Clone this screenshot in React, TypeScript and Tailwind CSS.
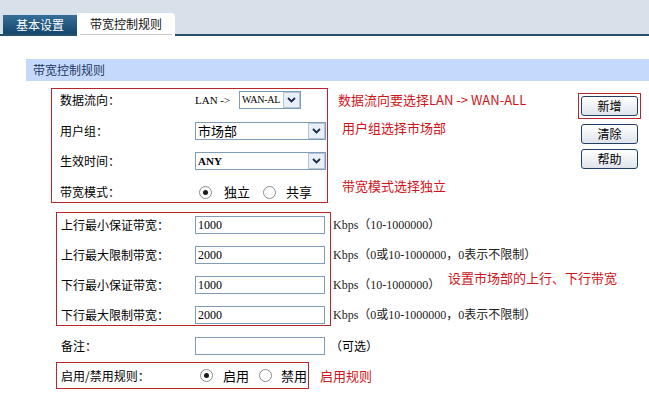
import React from "react";

const FONT = '"Liberation Serif", "Noto Sans CJK SC", serif';
const CJK = '"Noto Sans CJK SC", "Liberation Sans", sans-serif';

function Radio({ checked }: { checked?: boolean }) {
  return (
    <span className="w-[13px] h-[13px] rounded-full border border-[#8c8c8c] bg-white flex items-center justify-center shrink-0">
      {checked && <span className="w-[5px] h-[5px] rounded-full bg-[#1a1a1a]" />}
    </span>
  );
}

function Arrow() {
  return (
    <span className="w-[17px] h-full border border-[#b6c4d8] bg-[#e9eff8] flex items-center justify-center shrink-0">
      <svg width="9" height="6" viewBox="0 0 9 6">
        <path d="M1 1 L4.5 4.5 L8 1" stroke="#1b2a44" strokeWidth="1.8" fill="none" />
      </svg>
    </span>
  );
}

function Select({ w, children, textCls, serif }: { w: string; children: React.ReactNode; textCls: string; serif?: boolean }) {
  return (
    <div className={`${w} h-[18px] border border-[#7f9db9] bg-white flex items-center`}>
      <span
        className={`flex-1 pl-[2px] whitespace-nowrap ${textCls} leading-[16px] text-black`}
        style={{ fontFamily: serif ? FONT : CJK }}
      >
        {children}
      </span>
      <Arrow />
    </div>
  );
}

function Input({ value }: { value?: string }) {
  return (
    <div className="w-[130px] h-[18px] border border-[#7f9db9] bg-white flex items-center pl-[2px] text-[12px] leading-[16px] text-black" style={{ fontFamily: FONT }}>
      {value}
    </div>
  );
}

function Btn({ children }: { children: React.ReactNode }) {
  return (
    <div className="w-[57px] h-[20px] rounded-[3px] border border-[#20406a] bg-gradient-to-b from-white to-[#dfe4eb] flex items-center justify-center text-[12px] text-black">
      {children}
    </div>
  );
}

export default function App() {
  const red = "border border-[#b8262c]";
  return (
    <div className="w-[649px] h-[395px] bg-white overflow-hidden text-[12px] text-black" style={{ fontFamily: CJK }}>
      {/* tab band */}
      <div className="h-[36px] bg-[#d8e0ea] border-b-2 border-[#25506e] flex items-end pl-[3px]">
        <div className="w-[74px] h-[19px] bg-gradient-to-b from-[#356f98] to-[#15466b] text-white flex items-center justify-center text-[12px]">
          基本设置
        </div>
        <div className="w-[98px] h-[23px] -mb-[2px] bg-white rounded-tr-[4px] flex items-center justify-center text-[12px] text-[#111]">
          <span className="border-b border-[#c8c8c8] pb-[1px] px-[10px]">带宽控制规则</span>
        </div>
      </div>

      {/* section header */}
      <div className="mt-[23px] ml-[26px] h-[22px] bg-[#c5d9fc] pl-[7px] flex items-center text-[12px] text-[#1f3a63]">
        带宽控制规则
      </div>

      {/* first group */}
      <div className="flex items-start mt-[7px]">
        <div className={`${red} ml-[51px] w-[277px] h-[115px] pt-[1px] flex flex-col gap-[11px]`}>
          <div className="h-[20px] flex items-center">
            <span className="pl-[8px] w-[143px]">数据流向：</span>
            <span className="text-[11px] w-[44px]" style={{ fontFamily: FONT }}>LAN -&gt;</span>
            <Select w="w-[62px]" serif textCls="text-[10px] tracking-[-0.2px]">WAN-AL</Select>
          </div>
          <div className="h-[20px] flex items-center">
            <span className="pl-[8px] w-[143px]">用户组：</span>
            <Select w="w-[131px]" textCls="text-[13px]">市场部</Select>
          </div>
          <div className="h-[20px] flex items-center">
            <span className="pl-[8px] w-[143px]">生效时间：</span>
            <Select w="w-[131px]" serif textCls="text-[11px] font-bold">ANY</Select>
          </div>
          <div className="h-[20px] flex items-center">
            <span className="pl-[8px] w-[147px]">带宽模式：</span>
            <Radio checked />
            <span className="ml-[12px] text-[13px]">独立</span>
            <span className="ml-[13px]"><Radio /></span>
            <span className="ml-[10px] text-[13px]">共享</span>
          </div>
        </div>

        <div className="ml-[10px] flex flex-col text-[13px] text-[#d0141b] leading-[18px]">
          <span className="mt-[3px]">数据流向要选择LAN -&gt; WAN-ALL</span>
          <span className="mt-[10px] ml-[4px]">用户组选择市场部</span>
          <span className="mt-[40px] ml-[4px]">带宽模式选择独立</span>
        </div>

        <div className="ml-auto mr-[8px] mt-[5px] flex flex-col gap-[5px]">
          <div className="border border-[#b8262c] p-[2px]">
            <Btn>新增</Btn>
          </div>
          <div className="px-[3px] flex flex-col gap-[5px]">
            <Btn>清除</Btn>
            <Btn>帮助</Btn>
          </div>
        </div>
      </div>

      {/* bandwidth group */}
      <div className="flex items-start mt-[9px] ml-[56px]">
        <div className={`${red} w-[275px] h-[114px] pt-[3px] flex flex-col gap-[12px]`}>
          {[
            ["上行最小保证带宽：", "1000"],
            ["上行最大限制带宽：", "2000"],
            ["下行最小保证带宽：", "1000"],
            ["下行最大限制带宽：", "2000"],
          ].map(([l, v]) => (
            <div key={l + v} className="h-[18px] flex items-center">
              <span className="pl-[4px] w-[138px]">{l}</span>
              <Input value={v} />
            </div>
          ))}
        </div>
        <div className="relative ml-[2px] pt-[4px] flex flex-col gap-[12px] text-[12px] text-[#222]" style={{ fontFamily: FONT }}>
          <span className="h-[18px] flex items-center">Kbps（10-1000000）</span>
          <span className="h-[18px] flex items-center">Kbps（0或10-1000000，0表示不限制）</span>
          <span className="h-[18px] flex items-center">Kbps（10-1000000）</span>
          <span className="h-[18px] flex items-center">Kbps（0或10-1000000，0表示不限制）</span>
          <span className="absolute left-[115px] top-[56px] text-[13px] text-[#d0141b] whitespace-nowrap" style={{ fontFamily: CJK }}>
            设置市场部的上行、下行带宽
          </span>
        </div>
      </div>

      {/* remark */}
      <div className="mt-[11px] ml-[56px] h-[17px] flex items-center">
        <span className="pl-[5px] w-[139px]">备注：</span>
        <Input />
        <span className="ml-[5px] text-[12px]">（可选）</span>
      </div>

      {/* enable group */}
      <div className="mt-[8px] ml-[56px] flex items-center">
        <div className={`${red} w-[253px] h-[27px] flex items-center`}>
          <span className="pl-[4px] w-[143px]">启用/禁用规则：</span>
          <Radio checked />
          <span className="ml-[10px] text-[13px]">启用</span>
          <span className="ml-[10px]"><Radio /></span>
          <span className="ml-[9px] text-[13px]">禁用</span>
        </div>
        <span className="ml-[11px] text-[13px] text-[#d0141b]">启用规则</span>
      </div>
    </div>
  );
}
